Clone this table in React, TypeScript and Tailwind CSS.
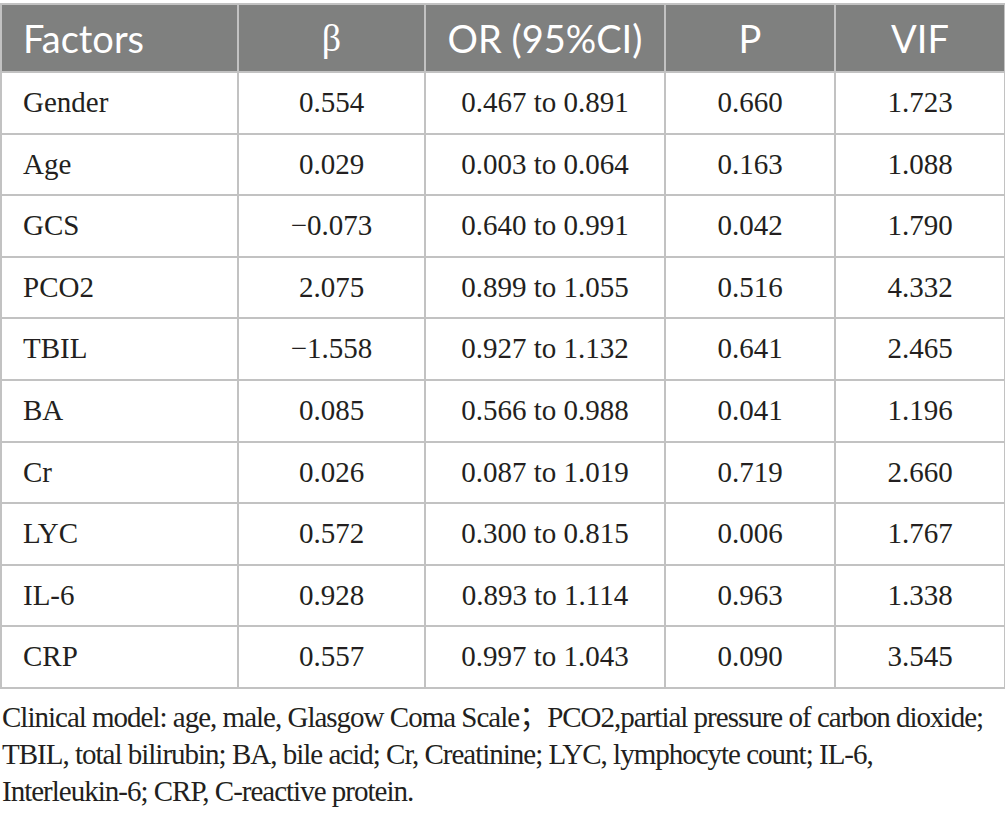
const rows: [string, string, string, string, string][] = [
  ["Gender", "0.554", "0.467 to 0.891", "0.660", "1.723"],
  ["Age", "0.029", "0.003 to 0.064", "0.163", "1.088"],
  ["GCS", "\u22120.073", "0.640 to 0.991", "0.042", "1.790"],
  ["PCO2", "2.075", "0.899 to 1.055", "0.516", "4.332"],
  ["TBIL", "\u22121.558", "0.927 to 1.132", "0.641", "2.465"],
  ["BA", "0.085", "0.566 to 0.988", "0.041", "1.196"],
  ["Cr", "0.026", "0.087 to 1.019", "0.719", "2.660"],
  ["LYC", "0.572", "0.300 to 0.815", "0.006", "1.767"],
  ["IL-6", "0.928", "0.893 to 1.114", "0.963", "1.338"],
  ["CRP", "0.557", "0.997 to 1.043", "0.090", "3.545"],
];

const head = ["Factors", "\u03b2", "OR (95%CI)", "P", "VIF"];

export default function App() {
  return (
    <div className="min-h-screen w-[1005px] bg-white pt-[3px] text-[#231f20]">
      <table className="w-[1004px] table-fixed border-collapse">
        <colgroup>
          <col className="w-[237px]" />
          <col className="w-[187px]" />
          <col className="w-[240px]" />
          <col className="w-[170px]" />
          <col className="w-[170px]" />
        </colgroup>
        <thead>
          <tr className="h-[68px] bg-[#7f807f] text-white">
            {head.map((h, i) => (
              <th
                key={h}
                className={
                  "border-2 border-[#c2c2c2] text-[38px] font-normal " +
                  (i === 1 ? "font-['Liberation_Serif',serif] " : "font-['Lato',sans-serif] ") +
                  (i === 0 ? "pl-[21px] text-left" : "text-center")
                }
              >
                {h}
              </th>
            ))}
          </tr>
        </thead>
        <tbody className="font-['Liberation_Serif',serif] text-[29px]">
          {rows.map((r) => (
            <tr key={r[0]} className="h-[61.6px]">
              {r.map((c, i) => (
                <td
                  key={i}
                  className={
                    "border-2 border-[#c2c2c2] " +
                    (i === 0 ? "pl-[21px] text-left" : "text-center")
                  }
                >
                  {c}
                </td>
              ))}
            </tr>
          ))}
        </tbody>
      </table>
      <p className="mt-[10px] whitespace-nowrap pl-[2px] font-['Liberation_Serif','Noto_Sans_CJK_SC',serif] text-[29px] leading-[37px] tracking-[-1px]">
        Clinical model: age, male, Glasgow Coma Scale；PCO2,partial pressure of carbon dioxide;
        <br />
        TBIL, total bilirubin; BA, bile acid; Cr, Creatinine; LYC, lymphocyte count; IL-6,
        <br />
        Interleukin-6; CRP, C-reactive protein.
      </p>
    </div>
  );
}
